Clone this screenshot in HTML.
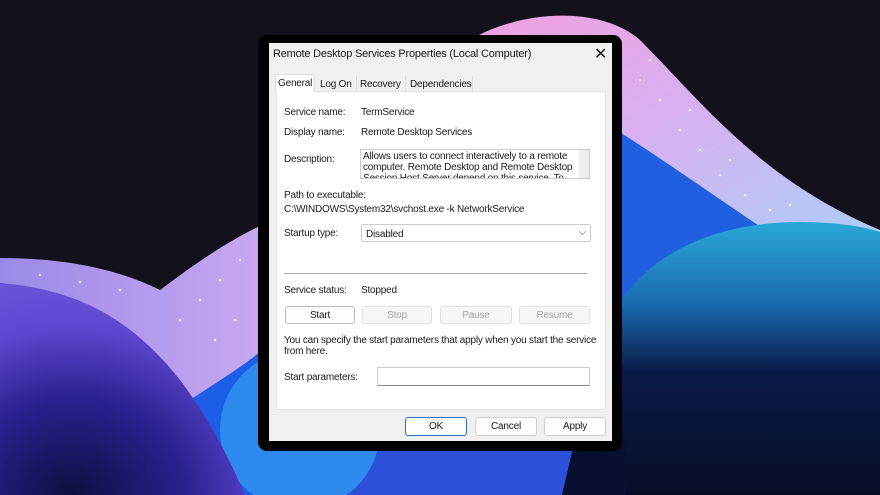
<!DOCTYPE html>
<html><head><meta charset="utf-8"><style>
*{margin:0;padding:0;box-sizing:border-box}
body{width:880px;height:495px;overflow:hidden;background:#12111c;font-family:"Liberation Sans",sans-serif;font-size:10px;color:#1a1a1a;position:relative;letter-spacing:-0.2px}
.a{position:absolute;white-space:nowrap}
.btn{position:absolute;background:#fdfdfd;border:1px solid #d0d0d0;border-radius:3px;text-align:center;line-height:17px;font-size:10px}
.dis{background:#f6f6f6;color:#a0a0a0;border-color:#e0e0e0}
</style></head><body>
<svg class="a" style="left:0;top:0" width="880" height="495">
<defs>
<linearGradient id="g1" x1="0" y1="0" x2="1" y2="1"><stop offset="0" stop-color="#f0a0e0"/><stop offset=".45" stop-color="#d8b0f0"/><stop offset="1" stop-color="#a8d0f8"/></linearGradient>
<linearGradient id="g2" x1="0" y1="0" x2="1" y2="0"><stop offset="0" stop-color="#9a8ae8"/><stop offset="1" stop-color="#c8a8f0"/></linearGradient>
<radialGradient id="g4" cx=".3" cy="1" r="1"><stop offset="0" stop-color="#0c1040"/><stop offset=".45" stop-color="#2a2090"/><stop offset=".8" stop-color="#5e48d0"/><stop offset="1" stop-color="#6a52d8"/></radialGradient>
<linearGradient id="g5" x1="0" y1="0" x2="0" y2="1"><stop offset="0" stop-color="#2aa8d8"/><stop offset=".3" stop-color="#1a6ab0"/><stop offset=".55" stop-color="#0a1a48"/><stop offset="1" stop-color="#070d26"/></linearGradient>
</defs>
<path d="M470 40 C520 10 600 5 640 40 C700 100 760 180 880 230 L880 260 L600 260 L600 40Z" fill="url(#g1)"/>
<path d="M600 120 C650 150 720 200 780 240 L700 300 L600 330Z" fill="#1f5fe0"/>
<path d="M600 495 L600 330 L615 310 C650 250 720 222 800 222 C840 222 870 228 880 232 L880 495Z" fill="url(#g5)"/>
<path d="M0 258 C80 258 130 275 160 290 C200 260 230 240 262 225 L262 360 C230 400 210 420 200 420 C170 360 120 300 0 283Z" fill="url(#g2)"/>
<path d="M190 400 C220 380 245 365 262 350 L262 495 L240 495Z" fill="#1d5ee8"/>
<path d="M258 440 L575 440 L562 495 L258 495Z" fill="#2d50d8"/>
<path d="M575 440 L625 440 L625 495 L562 495Z" fill="#080f30"/>
<circle cx="300" cy="430" r="80" fill="#2f8af0"/>
<path d="M0 283 C90 290 140 330 180 380 C210 420 230 460 245 495 L0 495Z" fill="url(#g4)"/>
<g fill="#fff" opacity=".7">
<circle cx="640" cy="80" r="1.3"/><circle cx="660" cy="100" r="1.3"/><circle cx="680" cy="130" r="1.3"/><circle cx="700" cy="150" r="1.3"/><circle cx="720" cy="175" r="1.3"/><circle cx="745" cy="195" r="1.3"/><circle cx="770" cy="210" r="1.3"/>
<circle cx="650" cy="60" r="1.3"/><circle cx="690" cy="110" r="1.3"/><circle cx="730" cy="160" r="1.3"/><circle cx="790" cy="205" r="1.3"/>
<circle cx="40" cy="275" r="1.3"/><circle cx="80" cy="282" r="1.3"/><circle cx="120" cy="290" r="1.3"/><circle cx="180" cy="320" r="1.3"/><circle cx="200" cy="300" r="1.3"/><circle cx="220" cy="280" r="1.3"/><circle cx="240" cy="260" r="1.3"/><circle cx="215" cy="340" r="1.3"/><circle cx="235" cy="320" r="1.3"/>
</g>
</svg>
<div class="a" style="left:258px;top:35px;width:364px;height:416px;background:#000;border-radius:9px"></div>
<div class="a" style="left:269px;top:43px;width:343px;height:398px;background:#f0f0f0"></div>
<div class="a" style="left:273px;top:48px;font-size:11px">Remote Desktop Services Properties (Local Computer)</div>
<div class="a" style="left:594px;top:44px;font-size:16px">✕</div>
<div class="a" style="left:276px;top:91px;width:330px;height:319px;background:#fff;border:1px solid #e4e4e4"></div>
<div class="a" style="left:275px;top:74px;width:40px;height:18px;background:#fff;border:1px solid #ddd;border-bottom:none"></div>
<div class="a" style="left:278px;top:78px">General</div>
<div class="a" style="left:320px;top:79px">Log On</div>
<div class="a" style="left:360px;top:79px">Recovery</div>
<div class="a" style="left:410px;top:79px">Dependencies</div>
<div class="a" style="left:356px;top:76px;width:1px;height:15px;background:#ddd"></div>
<div class="a" style="left:405px;top:76px;width:1px;height:15px;background:#ddd"></div>
<div class="a" style="left:472px;top:76px;width:1px;height:15px;background:#ddd"></div>
<div class="a" style="left:284px;top:107px">Service name:</div>
<div class="a" style="left:361px;top:107px">TermService</div>
<div class="a" style="left:284px;top:127px">Display name:</div>
<div class="a" style="left:361px;top:127px">Remote Desktop Services</div>
<div class="a" style="left:284px;top:154px">Description:</div>
<div class="a" style="left:360px;top:149px;width:230px;height:30px;border:1px solid #ccc;overflow:hidden;background:#fff"><div style="padding:1px 0 0 2px;line-height:11px;white-space:normal;width:215px">Allows users to connect interactively to a remote computer. Remote Desktop and Remote Desktop Session Host Server depend on this service. To</div><div class="a" style="right:0;top:0;width:10px;height:30px;background:#eee"></div></div>
<div class="a" style="left:284px;top:190px">Path to executable:</div>
<div class="a" style="left:284px;top:204px">C:\WINDOWS\System32\svchost.exe -k NetworkService</div>
<div class="a" style="left:284px;top:228px">Startup type:</div>
<div class="a" style="left:361px;top:224px;width:230px;height:18px;border:1px solid #ccc;border-radius:2px;background:#fff;padding:4px 0 0 4px">Disabled<span style="position:absolute;right:4px;top:2px;color:#555">⌵</span></div>
<div class="a" style="left:284px;top:273px;width:303px;height:1px;background:#a8a8a8"></div>
<div class="a" style="left:284px;top:285px">Service status:</div>
<div class="a" style="left:361px;top:285px">Stopped</div>
<div class="btn" style="left:285px;top:306px;width:70px;height:18px;border-color:#bbb">Start</div>
<div class="btn dis" style="left:362px;top:306px;width:70px;height:18px">Stop</div>
<div class="btn dis" style="left:440px;top:306px;width:72px;height:18px">Pause</div>
<div class="btn dis" style="left:519px;top:306px;width:71px;height:18px">Resume</div>
<div class="a" style="left:284px;top:335px;line-height:11px">You can specify the start parameters that apply when you start the service<br>from here.</div>
<div class="a" style="left:284px;top:372px">Start parameters:</div>
<div class="a" style="left:377px;top:367px;width:213px;height:19px;border:1px solid #ccc;border-bottom-color:#888;background:#fff"></div>
<div class="btn" style="left:405px;top:417px;width:62px;height:19px;border:1px solid #2a6fc0">OK</div>
<div class="btn" style="left:475px;top:417px;width:62px;height:19px">Cancel</div>
<div class="btn" style="left:544px;top:417px;width:62px;height:19px">Apply</div>
</body></html>
